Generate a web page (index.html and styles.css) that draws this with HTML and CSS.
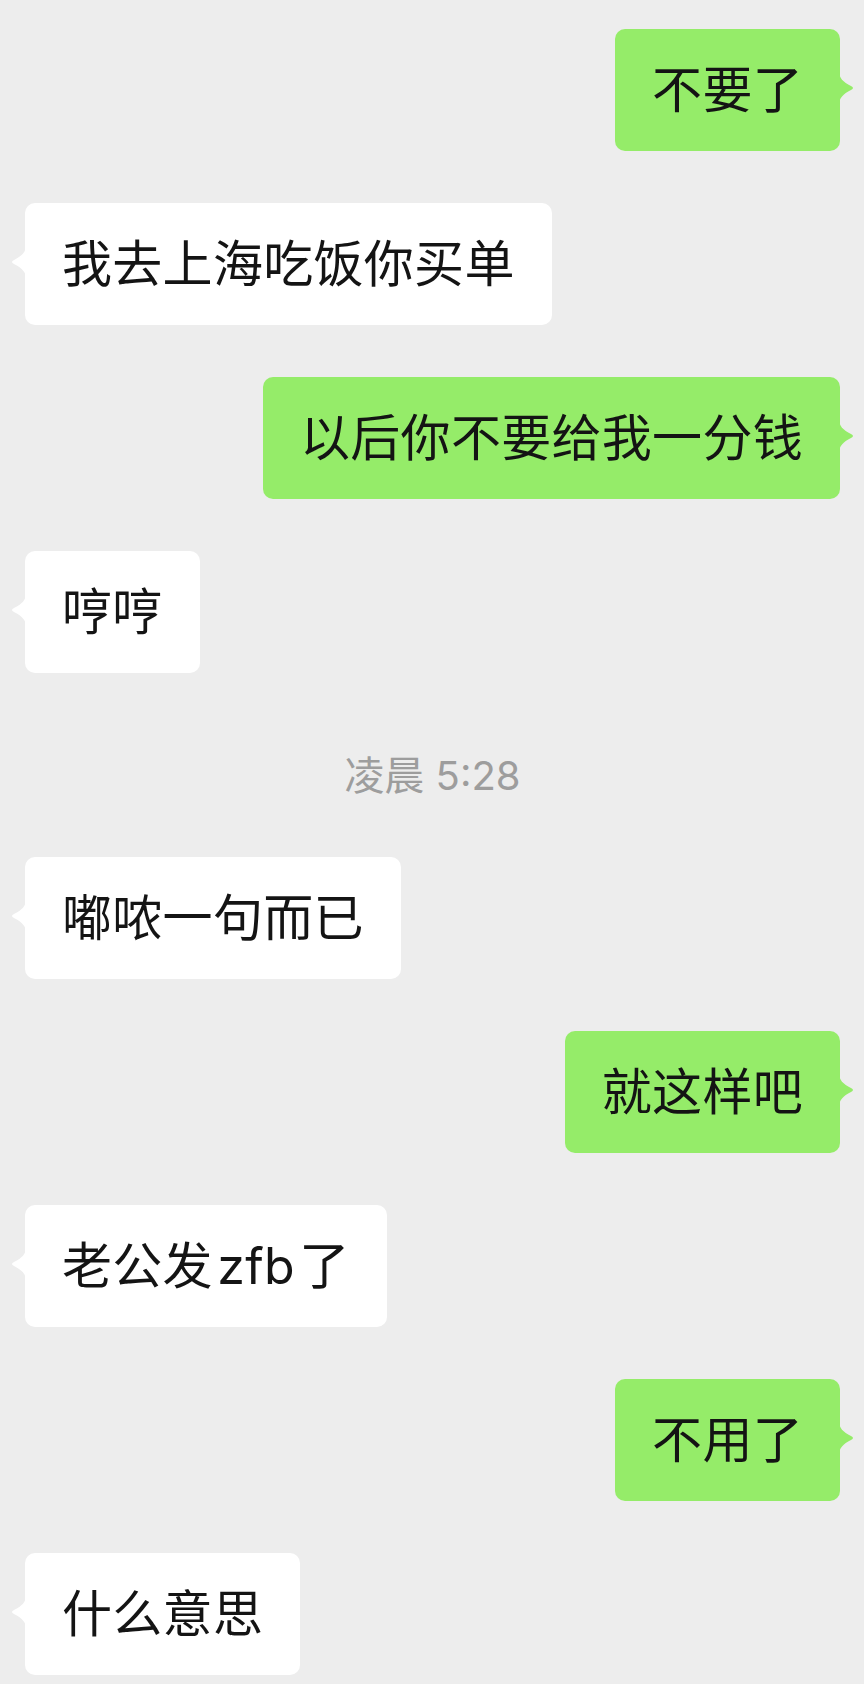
FILE: index.html
```html
<!DOCTYPE html>
<html lang="zh-CN">
<head>
<meta charset="utf-8">
<title>聊天</title>
<link rel="stylesheet" href="styles.css">
</head>
<body>
<main class="chat">
  <div class="msg right">不要了</div>
  <div class="msg left">我去上海吃饭你买单</div>
  <div class="msg right">以后你不要给我一分钱</div>
  <div class="msg left">哼哼</div>
  <div class="time">凌晨 5:28</div>
  <div class="msg left">嘟哝一句而已</div>
  <div class="msg right">就这样吧</div>
  <div class="msg left">老公发 zfb 了</div>
  <div class="msg right">不用了</div>
  <div class="msg left">什么意思</div>
</main>
</body>
</html>
```
FILE: styles.css
```css
html, body {
  margin: 0;
  padding: 0;
  background: #ededed;
}

body {
  font-family: "Inter", "Noto Sans CJK SC", sans-serif;
  color: #141414;
}

.chat {
  display: flex;
  flex-direction: column;
  gap: 52px;
  padding: 29px 24px 0 25px;
}

.msg {
  position: relative;
  font-size: 50px;
  line-height: 50px;
  letter-spacing: 0.3px;
  word-spacing: -10px;
  padding: 36px 37px;
  border-radius: 10px;
  white-space: nowrap;
}

.msg::before {
  content: "";
  position: absolute;
  top: 42px;
  width: 16px;
  height: 34px;
  background: inherit;
}

.left {
  align-self: flex-start;
  background: #ffffff;
}

.left::before {
  left: -15px;
  clip-path: path("M16 0 C16 7 12 11 4 15 Q0 17 4 19 C12 23 16 27 16 34 Z");
}

.right {
  align-self: flex-end;
  background: #95ec69;
}

.right::before {
  right: -15px;
  clip-path: path("M0 0 C0 7 4 11 12 15 Q16 17 12 19 C4 23 0 27 0 34 Z");
}

.time {
  align-self: center;
  font-size: 40px;
  line-height: 50px;
  color: #9d9d9d;
  margin: 26px 0 4px;
}
```
